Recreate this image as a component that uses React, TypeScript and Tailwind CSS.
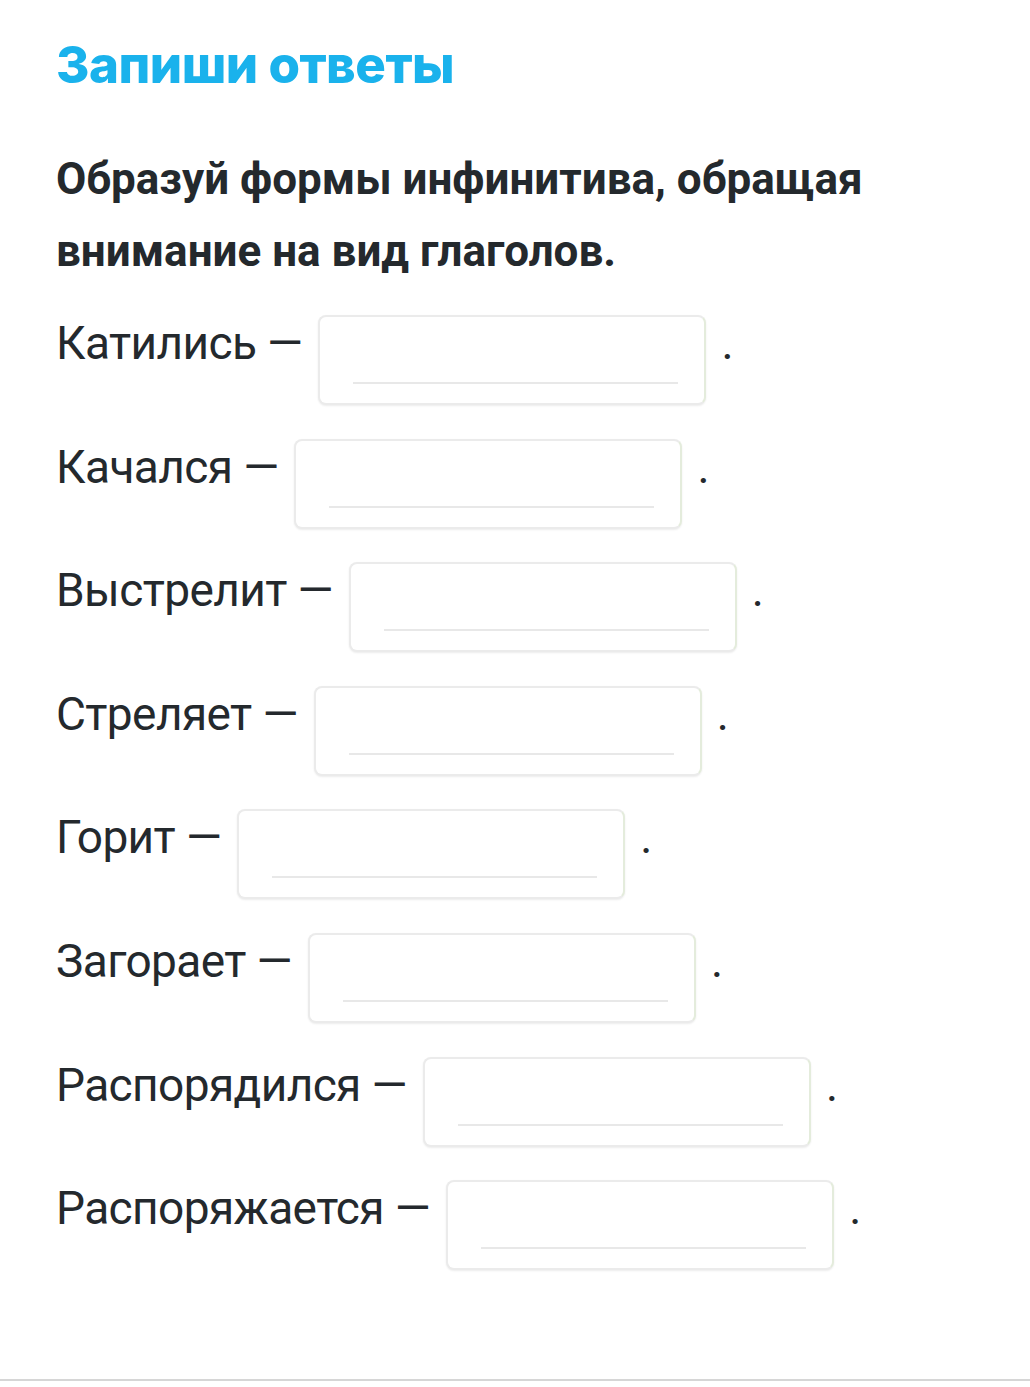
import React from 'react';

const verbs = [
  'Катились',
  'Качался',
  'Выстрелит',
  'Стреляет',
  'Горит',
  'Загорает',
  'Распорядился',
  'Распоряжается',
];

const AnswerBox: React.FC = () => (
  <div className="flex h-[90px] w-[388px] shrink-0 items-end rounded-lg border-2 border-[#ebebeb] border-r-[#e4ecdc] bg-white pb-[19px] pl-[33px] pr-[26px] shadow-[0_1px_2px_rgba(0,0,0,0.08)]">
    <div className="h-[2px] w-full bg-[#e8e8e8]" />
  </div>
);

export default function App() {
  return (
    <div className="min-h-[1381px] w-full border-b-2 border-[#d6d6d6] bg-white font-['Roboto','Noto_Sans',sans-serif] text-[#24292d]">
      <div className="px-[56px] pt-[29px]">
        <h1 className="font-['Inter',sans-serif] text-[51px] font-extrabold leading-[72px] tracking-[-0.5px] text-[#1ab2ec]">
          Запиши ответы
        </h1>

        <p className="mt-[42px] text-[44px] font-bold leading-[72px]">
          Образуй формы инфинитива, обращая внимание на вид глаголов.
        </p>

        <div className="mt-[28px] flex flex-col gap-[33.6px]">
          {verbs.map((verb) => (
            <div key={verb} className="flex items-start">
              <span className="mt-[2px] whitespace-nowrap text-[46px] leading-[52px] tracking-[-0.6px]">{verb} —</span>
              <div className="ml-[16px]">
                <AnswerBox />
              </div>
              <span className="ml-[15px] mt-[2px] text-[46px] leading-[52px]">.</span>
            </div>
          ))}
        </div>
      </div>
    </div>
  );
}
